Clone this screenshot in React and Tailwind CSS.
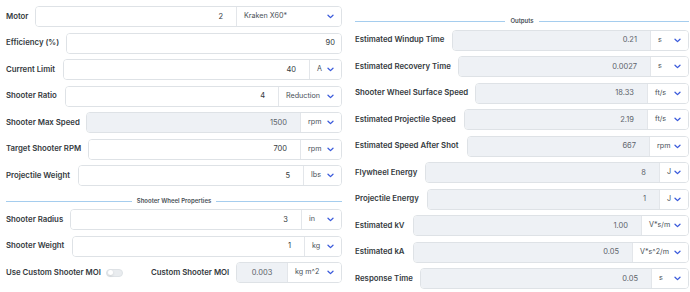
import React from 'react';

const leftRows = [
  { label: 'Motor', lw: 'w-[29px]', value: '2', unit: 'Kraken X60*', uw: 'w-[105px]' },
  { label: 'Efficiency (%)', lw: 'w-[60px]', value: '90' },
  { label: 'Current Limit', lw: 'w-[57px]', value: '40', unit: 'A', uw: 'w-[32px]' },
  { label: 'Shooter Ratio', lw: 'w-[59px]', value: '4', unit: 'Reduction', uw: 'w-[63px]' },
  { label: 'Shooter Max Speed', lw: 'w-[80px]', value: '1500', unit: 'rpm', uw: 'w-[41px]', readOnly: true },
  { label: 'Target Shooter RPM', lw: 'w-[82px]', value: '700', unit: 'rpm', uw: 'w-[41px]' },
  { label: 'Projectile Weight', lw: 'w-[72px]', value: '5', unit: 'lbs', uw: 'w-[38px]' },
];

const wheelRows = [
  { label: 'Shooter Radius', lw: 'w-[64px]', value: '3', unit: 'in', uw: 'w-[40px]' },
  { label: 'Shooter Weight', lw: 'w-[66px]', value: '1', unit: 'kg', uw: 'w-[37px]' },
];

const outputRows = [
  { label: 'Estimated Windup Time', lw: 'w-[97px]', value: '0.21', unit: 's', uw: 'w-[38px]' },
  { label: 'Estimated Recovery Time', lw: 'w-[103px]', value: '0.0027', unit: 's', uw: 'w-[38px]' },
  { label: 'Shooter Wheel Surface Speed', lw: 'w-[120px]', value: '18.33', unit: 'ft/s', uw: 'w-[41px]' },
  { label: 'Estimated Projectile Speed', lw: 'w-[109px]', value: '2.19', unit: 'ft/s', uw: 'w-[41px]' },
  { label: 'Estimated Speed After Shot', lw: 'w-[112px]', value: '667', unit: 'rpm', uw: 'w-[39px]' },
  { label: 'Flywheel Energy', lw: 'w-[70px]', value: '8', unit: 'J', uw: 'w-[29px]' },
  { label: 'Projectile Energy', lw: 'w-[72px]', value: '1', unit: 'J', uw: 'w-[29px]' },
  { label: 'Estimated kV', lw: 'w-[58px]', value: '1.00', unit: 'V*s/m', uw: 'w-[47px]' },
  { label: 'Estimated kA', lw: 'w-[58px]', value: '0.05', unit: 'V*s^2/m', uw: 'w-[56px]' },
  { label: 'Response Time', lw: 'w-[65px]', value: '0.05', unit: 's', uw: 'w-[37px]' },
];

const Chevron = () => (
  <svg width="7" height="5" viewBox="0 0 7 5" fill="none" className="shrink-0">
    <path d="M1 1.2l2.5 2.4L6 1.2" stroke="#3b5bdb" strokeWidth="1.3" strokeLinecap="round" strokeLinejoin="round" />
  </svg>
);

const UnitSelect = ({ unit, width }) => (
  <div className={`${width} h-full flex items-center justify-between pl-[7px] pr-[7px] border-l border-[#e3e6ea] bg-white text-[7.2px] text-[#495057] whitespace-nowrap`}>
    <span>{unit}</span>
    <Chevron />
  </div>
);

const Field = ({ value, unit, uw, readOnly }) => (
  <div className="flex-1 h-[21px] flex border border-[#dee2e6] rounded-[4px] overflow-hidden">
    <div
      className={`flex-1 h-full flex items-center justify-end text-[7.5px] ${unit ? 'pr-[13px]' : 'pr-[6px]'} ${
        readOnly ? 'bg-[#eef1f5] text-[#5c636a]' : 'bg-white text-[#343a40]'
      }`}
    >
      {value}
    </div>
    {unit && <UnitSelect unit={unit} width={uw} />}
  </div>
);

const Row = ({ label, lw, ...rest }) => (
  <div className="flex items-center h-[21px]">
    <div className={`${lw} shrink-0 text-[7.8px] font-semibold text-[#343a40] whitespace-nowrap`}>{label}</div>
    <Field {...rest} />
  </div>
);

const Divider = ({ title, className }) => (
  <div className={`flex items-center h-[8px] gap-[5px] ${className}`}>
    <div className="flex-1 h-px bg-[#a5cdee]" />
    <span className="text-[6px] font-semibold text-[#495057] leading-none">{title}</span>
    <div className="flex-1 h-px bg-[#a5cdee]" />
  </div>
);

export default function App() {
  return (
    <div
      className="w-[690px] h-[292px] bg-white flex gap-[13px] pl-[6px] pr-[1px]"
      style={{ fontFamily: 'Inter, "Noto Sans", sans-serif' }}
    >
      {/* Inputs */}
      <div className="w-[336px] flex flex-col pt-[6px]">
        <div className="flex flex-col gap-[5.5px]">
          {leftRows.map((r) => (
            <Row key={r.label} {...r} />
          ))}
        </div>

        <Divider title="Shooter Wheel Properties" className="mt-[11px] mb-[4px]" />

        <div className="flex flex-col gap-[5.5px]">
          {wheelRows.map((r) => (
            <Row key={r.label} {...r} />
          ))}

          {/* Custom MOI */}
          <div className="flex items-center h-[21px]">
            <div className="w-[100px] shrink-0 text-[7.8px] font-semibold text-[#343a40] whitespace-nowrap">
              Use Custom Shooter MOI
            </div>
            <div className="w-[17px] h-[8px] rounded-full bg-[#e9ecef] border border-[#dee2e6] flex items-center px-[1px]">
              <div className="w-[5px] h-[5px] rounded-full bg-white shadow-sm" />
            </div>
            <div className="w-[28px] shrink-0" />
            <div className="w-[85px] shrink-0 text-[7.8px] font-semibold text-[#343a40] whitespace-nowrap">
              Custom Shooter MOI
            </div>
            <div className="flex-1 h-[21px] flex border border-[#dee2e6] rounded-[4px] overflow-hidden">
              <div className="flex-1 h-full flex items-center justify-center bg-[#eef1f5] text-[7.5px] text-[#5c636a]">
                0.003
              </div>
              <UnitSelect unit="kg m^2" width="w-[54px]" />
            </div>
          </div>
        </div>
      </div>

      {/* Outputs */}
      <div className="w-[334px] flex flex-col pt-[17px]">
        <Divider title="Outputs" className="mb-[4.5px]" />
        <div className="flex flex-col gap-[5.5px]">
          {outputRows.map((r) => (
            <Row key={r.label} {...r} readOnly />
          ))}
        </div>
      </div>
    </div>
  );
}
